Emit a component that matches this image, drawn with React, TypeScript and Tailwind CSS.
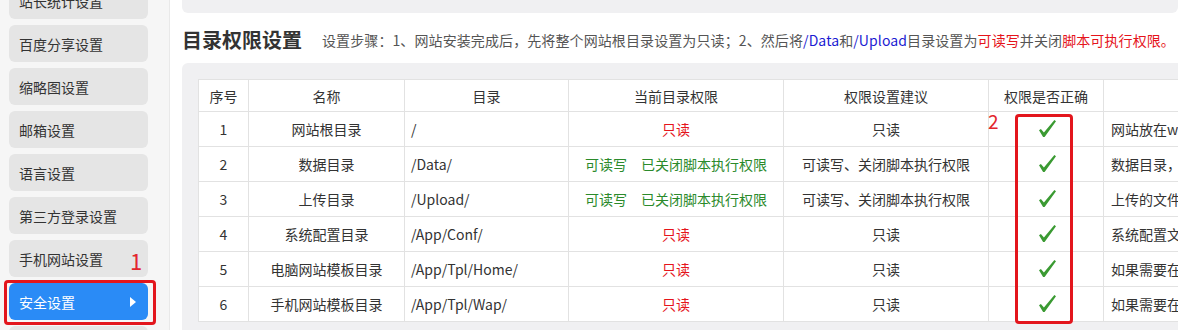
import React from 'react';

const menu = ['站长统计设置', '百度分享设置', '缩略图设置', '邮箱设置', '语言设置', '第三方登录设置', '手机网站设置', '安全设置', '其他设置'];

const RO = <span className="text-[#e5141b]">只读</span>;
const RW = (
  <span className="text-[#2b8a2b]">
    可读写<span className="ml-[14px]">已关闭脚本执行权限</span>
  </span>
);

const rows = [
  { n: '1', name: '网站根目录', dir: '/', cur: RO, tip: '只读', note: '网站放在wwwroot目录下时，根目录只需要读取权限即可' },
  { n: '2', name: '数据目录', dir: '/Data/', cur: RW, tip: '可读写、关闭脚本执行权限', note: '数据目录，存放数据库备份及缓存文件' },
  { n: '3', name: '上传目录', dir: '/Upload/', cur: RW, tip: '可读写、关闭脚本执行权限', note: '上传的文件都保存在此目录下' },
  { n: '4', name: '系统配置目录', dir: '/App/Conf/', cur: RO, tip: '只读', note: '系统配置文件目录，修改配置时需临时开启写权限' },
  { n: '5', name: '电脑网站模板目录', dir: '/App/Tpl/Home/', cur: RO, tip: '只读', note: '如果需要在后台修改模板，请临时设置为可读写' },
  { n: '6', name: '手机网站模板目录', dir: '/App/Tpl/Wap/', cur: RO, tip: '只读', note: '如果需要在后台修改模板，请临时设置为可读写' },
];

const Check = () => (
  <svg width="17" height="17" viewBox="0 0 17 17" className="inline-block align-middle mt-[-3px]">
    <polygon points="0,10.3 1.9,8.9 4.9,12.6 15.4,0 17,1.3 5.6,17 4.1,17" fill="#3a9a32" />
  </svg>
);

export default function App() {
  return (
    <div
      className="relative w-[1178px] h-[330px] overflow-hidden flex bg-white text-[14px] text-[#333]"
      style={{ fontFamily: '"Noto Sans CJK SC", "Microsoft YaHei", sans-serif' }}
    >
      {/* sidebar */}
      <div className="w-[170px] shrink-0 bg-[#f6f6f6] border-r border-[#e9e9e9]">
        <div className="mt-[-18px] flex flex-col gap-[6px] pl-[9px]">
          {menu.map((m) => {
            const active = m === '安全设置';
            return (
              <div
                key={m}
                className={
                  'w-[139px] h-[37px] rounded-[6px] flex items-center justify-between px-[10px] leading-none ' +
                  (active ? 'bg-[#2a8bf6] text-white' : 'bg-[#e5e5e5] text-[#333]')
                }
              >
                <span>{m}</span>
                {active && <span className="w-0 h-0 mr-[2px] border-y-[5px] border-y-transparent border-l-[6px] border-l-white" />}
              </div>
            );
          })}
        </div>
      </div>

      {/* main */}
      <div className="flex-1 min-w-0 pl-[12px] flex flex-col">
        <div className="h-[13px] shrink-0 bg-[#f0f0f2] rounded-b-[6px]" />
        <div className="h-[50px] shrink-0 flex items-center pt-[3px]">
          <h2 className="shrink-0 whitespace-nowrap text-[20px] font-bold text-[#333] leading-none">目录权限设置</h2>
          <p className="ml-[20px] text-[14px] text-[#555] leading-none whitespace-nowrap tracking-[0.1px]">
            设置步骤：1、网站安装完成后，先将整个网站根目录设置为只读；2、然后将
            <span className="text-[#1c1cd2]">/Data</span>和<span className="text-[#1c1cd2]">/Upload</span>目录设置为
            <span className="text-[#e5141b]">可读写</span>并关闭<span className="text-[#e5141b]">脚本可执行权限。</span>
          </p>
        </div>
        <div className="bg-[#f0f0f2] rounded-[6px] p-4 w-[1200px]">
          <table className="table-fixed border-collapse bg-white w-[1320px]">
            <colgroup>
              <col className="w-[50px]" />
              <col className="w-[156px]" />
              <col className="w-[164px]" />
              <col className="w-[215px]" />
              <col className="w-[205px]" />
              <col className="w-[115px]" />
              <col className="w-[415px]" />
            </colgroup>
            <thead>
              <tr className="h-[32px]">
                {['序号', '名称', '目录', '当前目录权限', '权限设置建议', '权限是否正确', ''].map((h, i) => (
                  <th key={i} className="border border-[#e2e2e2] font-normal text-center leading-none">{h}</th>
                ))}
              </tr>
            </thead>
            <tbody>
              {rows.map((r) => (
                <tr key={r.n} className="h-[35px]">
                  <td className="border border-[#e2e2e2] text-center leading-none">{r.n}</td>
                  <td className="border border-[#e2e2e2] text-center leading-none">{r.name}</td>
                  <td className="border border-[#e2e2e2] pl-[6px] leading-none">{r.dir}</td>
                  <td className="border border-[#e2e2e2] text-center leading-none">{r.cur}</td>
                  <td className="border border-[#e2e2e2] text-center leading-none">{r.tip}</td>
                  <td className="border border-[#e2e2e2] text-center leading-none pl-[3px]">
                    <Check />
                  </td>
                  <td className="border border-[#e2e2e2] pl-[7px] leading-none whitespace-nowrap overflow-hidden">{r.note}</td>
                </tr>
              ))}
            </tbody>
          </table>
        </div>
      </div>

      {/* annotations */}
      <div className="absolute left-[4px] top-[280px] w-[152px] h-[45px] border-[3px] border-[#e3161d] rounded-[4px]" />
      <span className="absolute left-[130px] top-[249px] text-[22px] text-[#e3262d] leading-none">1</span>
      <div className="absolute left-[1015px] top-[114px] w-[58px] h-[210px] border-[3px] border-[#e3161d] rounded-[4px]" />
      <span className="absolute left-[988px] top-[111px] text-[19px] text-[#e3262d] leading-none">2</span>
    </div>
  );
}
